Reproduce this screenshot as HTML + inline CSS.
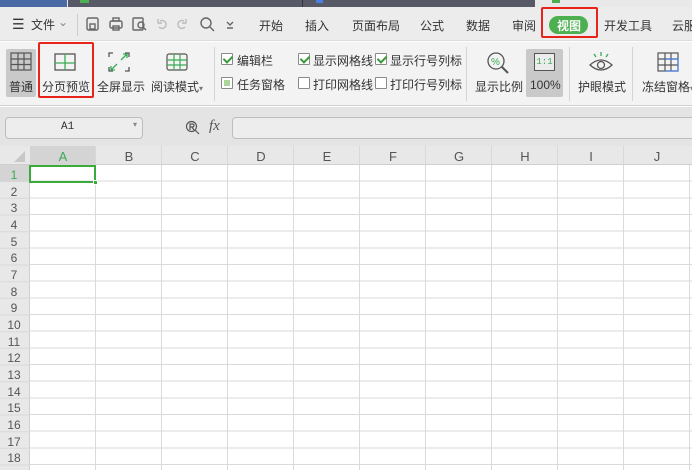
<!DOCTYPE html>
<html><head><meta charset="utf-8"><style>
*{margin:0;padding:0;box-sizing:border-box}
body{width:692px;height:470px;overflow:hidden;position:relative;background:#fff;font-family:"Liberation Sans","Noto Sans CJK SC",sans-serif;color:#333}
.a{position:absolute}
.t{position:absolute;font-size:12px;white-space:nowrap;color:#333}
.sep{position:absolute;width:1px;background:#d4d4d4}
.cb{position:absolute;width:12px;height:12px;border:1px solid #8a8a8a;background:#fff;border-radius:1px}
.cb.on::after{content:"";position:absolute;left:3px;top:0px;width:4px;height:7px;border:solid #3a9a3a;border-width:0 2px 2px 0;transform:rotate(45deg)}
</style></head><body>
<!-- top strip -->
<div class="a" style="left:0;top:0;width:692px;height:8px;background:#e9e9e9"></div>
<div class="a" style="left:0;top:0;width:67px;height:7px;background:#4a6aa5"></div>
<div class="a" style="left:68px;top:0;width:467px;height:7px;background:#575a66"></div>
<div class="a" style="left:80px;top:0;width:9px;height:3px;background:#4caf50"></div>
<div class="a" style="left:302px;top:0;width:1px;height:7px;background:#333"></div>
<div class="a" style="left:316px;top:0;width:7px;height:3px;background:#4a7ee0"></div>
<div class="a" style="left:552px;top:0;width:8px;height:3px;background:#4caf50"></div>
<!-- menu row -->
<div class="a" style="left:0;top:7px;width:692px;height:34px;background:#ececec;border-bottom:1px solid #dcdcdc"></div>
<div class="t" style="left:12px;top:16px;font-size:14px">☰</div>
<div class="t" style="left:31px;top:16px">文件</div>
<div class="t" style="left:58px;top:15px;color:#888">⌄</div>
<div class="sep" style="left:77px;top:14px;height:22px;background:#ccc"></div>
<svg class="a" style="left:86px;top:16px" width="150" height="16" fill="none" stroke="#666" stroke-width="1.4">
<rect x="1" y="2" width="11" height="12" rx="1.5"/><rect x="4" y="8" width="5" height="5"/>
<rect x="24" y="5" width="12" height="7" rx="1.5"/><rect x="27" y="2" width="6" height="3"/><rect x="27" y="10" width="6" height="4"/>
<rect x="47" y="2" width="10" height="12" rx="1"/><circle cx="55" cy="9" r="3"/><path d="M57 11l3 3"/>
<path d="M74 5a4 4 0 1 1-1 6M72 3v4h4" stroke="#bbb"/>
<path d="M98 5a4 4 0 1 0 1 6M100 3v4h-4" stroke="#bbb"/>
<circle cx="120" cy="7" r="5"/><path d="M124 11l4 4"/>
<path d="M141 6l3 3 3-3M141 12h6"/>
</svg>
<div class="t" style="left:259px;top:17px">开始</div>
<div class="t" style="left:305px;top:17px">插入</div>
<div class="t" style="left:352px;top:17px">页面布局</div>
<div class="t" style="left:420px;top:17px">公式</div>
<div class="t" style="left:466px;top:17px">数据</div>
<div class="t" style="left:512px;top:17px">审阅</div>
<div class="a" style="left:549px;top:16px;width:39px;height:18px;background:#4caf50;border-radius:9px"></div>
<div class="t" style="left:557px;top:17px;color:#fff;font-weight:bold">视图</div>
<div class="a" style="left:541px;top:7px;width:57px;height:31px;border:2px solid #e8231a;border-radius:2px"></div>
<div class="t" style="left:604px;top:17px">开发工具</div>
<div class="t" style="left:672px;top:17px">云服</div>
<!-- ribbon -->
<div class="a" style="left:0;top:42px;width:692px;height:64px;background:#f3f3f3;border-bottom:1px solid #d0d0d0"></div>
<div class="a" style="left:6px;top:49px;width:30px;height:48px;background:#c9c9c9;border-radius:2px"></div>
<svg class="a" style="left:10px;top:52px" width="22" height="20" fill="none" stroke="#555" stroke-width="1.2"><rect x="1" y="1" width="20" height="17"/><path d="M1 7h20M1 12.5h20M8 1v17M14 1v17"/></svg>
<div class="t" style="left:9px;top:78px">普通</div>
<svg class="a" style="left:54px;top:52px" width="22" height="20" fill="none" stroke-width="1.3"><rect x="1" y="2" width="20" height="16" stroke="#555"/><path d="M1 11h20M11 2v16" stroke="#3aaa55"/></svg>
<div class="t" style="left:42px;top:78px">分页预览</div>
<div class="a" style="left:38px;top:42px;width:56px;height:56px;border:2px solid #e8231a;border-radius:2px"></div>
<svg class="a" style="left:108px;top:52px" width="22" height="20" fill="none" stroke-width="1.3"><path d="M1 5V1h4M21 5V1h-4M1 15v4h4M21 15v4h-4" stroke="#555"/><path d="M13 8l6-6M3 18l6-6M15 2h4v4M3 14v4h4" stroke="#3aaa55"/></svg>
<div class="t" style="left:97px;top:78px">全屏显示</div>
<svg class="a" style="left:166px;top:52px" width="22" height="20" fill="none" stroke-width="1.2"><rect x="1" y="2" width="20" height="16" rx="2" stroke="#555"/><path d="M1 8h20M1 13h20M8 2v16M14 2v16" stroke="#3aaa55"/></svg>
<div class="t" style="left:151px;top:78px">阅读模式<span style="font-size:8px;color:#777">▾</span></div>
<div class="sep" style="left:214px;top:47px;height:54px"></div>
<div class="cb on" style="left:221px;top:53px"></div><div class="t" style="left:237px;top:52px">编辑栏</div>
<div class="cb" style="left:221px;top:77px;background:#aed49e;box-shadow:inset 0 0 0 2px #fff"></div><div class="t" style="left:237px;top:76px">任务窗格</div>
<div class="cb on" style="left:298px;top:53px"></div><div class="t" style="left:313px;top:52px">显示网格线</div>
<div class="cb" style="left:298px;top:77px"></div><div class="t" style="left:313px;top:76px">打印网格线</div>
<div class="cb on" style="left:375px;top:53px"></div><div class="t" style="left:390px;top:52px">显示行号列标</div>
<div class="cb" style="left:375px;top:77px"></div><div class="t" style="left:390px;top:76px">打印行号列标</div>
<div class="sep" style="left:466px;top:47px;height:54px"></div>
<svg class="a" style="left:486px;top:51px" width="24" height="24" fill="none" stroke="#555" stroke-width="1.3"><circle cx="10" cy="10" r="8"/><path d="M16 16l6 6" stroke-width="2"/><text x="5" y="14" font-size="10" fill="#3aaa55" stroke="none" font-family="Liberation Sans">%</text></svg>
<div class="t" style="left:475px;top:78px">显示比例</div>
<div class="a" style="left:526px;top:49px;width:37px;height:48px;background:#c9c9c9;border-radius:2px"></div>
<div class="a" style="left:534px;top:53px;width:21px;height:18px;border:1.3px solid #555;background:#ececec;font-size:9px;color:#3aaa55;text-align:center;line-height:16px;font-family:'Liberation Mono',monospace">1:1</div>
<div class="t" style="left:530px;top:78px">100%</div>
<div class="sep" style="left:569px;top:47px;height:54px"></div>
<svg class="a" style="left:588px;top:50px" width="26" height="24" fill="none" stroke="#555" stroke-width="1.3"><path d="M2 15q11-10 22 0q-11 10-22 0z"/><circle cx="13" cy="15" r="3.5"/><path d="M13 2v4M6 4l2 3M20 4l-2 3" stroke="#3aaa55"/></svg>
<div class="t" style="left:578px;top:78px">护眼模式</div>
<div class="sep" style="left:632px;top:47px;height:54px"></div>
<svg class="a" style="left:657px;top:52px" width="22" height="20" fill="none" stroke-width="1.2"><rect x="1" y="1" width="20" height="18" stroke="#555"/><path d="M1 7h20M8 1v18M14 1v18M1 13h20" stroke="#555"/><path d="M8 7h13v12H8" stroke="#4a7ee0"/></svg>
<div class="t" style="left:642px;top:78px">冻结窗格<span style="font-size:8px;color:#777">▾</span></div>
<!-- formula area -->
<div class="a" style="left:0;top:107px;width:692px;height:39px;background:#e4e4e4"></div>
<div class="a" style="left:5px;top:117px;width:138px;height:22px;background:#ededed;border:1px solid #bdbdbd;border-radius:4px"></div>
<div class="t" style="left:61px;top:121px;font-family:'Liberation Mono',monospace;font-size:11px">A1</div>
<div class="t" style="left:133px;top:120px;font-size:8px;color:#888">▾</div>
<svg class="a" style="left:185px;top:120px" width="16" height="16" fill="none" stroke="#555" stroke-width="1.2"><circle cx="6.5" cy="6.5" r="5"/><path d="M10 10l4 4"/><path d="M5 4h2.5a1.5 1.5 0 0 1 0 3H5zM5 4v6M7 7l2 3"/></svg>
<div class="t" style="left:209px;top:118px;font-family:'Liberation Serif',serif;font-style:italic;font-size:15px;color:#555">fx</div>
<div class="a" style="left:232px;top:117px;width:470px;height:22px;background:#ededed;border:1px solid #bdbdbd;border-radius:4px"></div>
<!-- grid -->
<div class="a" style="left:0;top:146px;width:692px;height:19px;background:#e8e8e8;border-bottom:1px solid #cfcfcf"></div>
<div class="a" style="left:30px;top:146px;width:66px;height:19px;background:#d4d4d4"></div>
<div class="a" style="left:0;top:165px;width:30px;height:305px;background:#e8e8e8;border-right:1px solid #cfcfcf"></div>
<div class="a" style="left:0;top:165px;width:30px;height:17px;background:#d4d4d4"></div>
<svg class="a" style="left:12px;top:151px" width="14" height="12"><path d="M13 0V11H2z" fill="#c8c8c8"/></svg>
<div class="a" style="left:30px;top:165px;width:662px;height:305px;background-image:repeating-linear-gradient(to bottom,transparent 0,transparent 15.67px,#dadada 15.67px,#dadada 16.67px),repeating-linear-gradient(to right,transparent 0,transparent 65px,#dadada 65px,#dadada 66px)"></div>
<svg class="a" style="left:0;top:146px" width="692" height="324" font-family="Liberation Sans" font-size="13" fill="#555">
<g stroke="#d8d8d8"><line x1="95.5" y1="0" x2="95.5" y2="19"/><line x1="161.5" y1="0" x2="161.5" y2="19"/><line x1="227.5" y1="0" x2="227.5" y2="19"/><line x1="293.5" y1="0" x2="293.5" y2="19"/><line x1="359.5" y1="0" x2="359.5" y2="19"/><line x1="425.5" y1="0" x2="425.5" y2="19"/><line x1="491.5" y1="0" x2="491.5" y2="19"/><line x1="557.5" y1="0" x2="557.5" y2="19"/><line x1="623.5" y1="0" x2="623.5" y2="19"/></g>
<g text-anchor="middle"><text x="63" y="15" fill="#3aaa55">A</text><text x="129" y="15">B</text><text x="195" y="15">C</text><text x="261" y="15">D</text><text x="327" y="15">E</text><text x="393" y="15">F</text><text x="459" y="15">G</text><text x="525" y="15">H</text><text x="591" y="15">I</text><text x="657" y="15">J</text></g>
<g text-anchor="middle" font-size="12">
<text x="14" y="33" fill="#3aaa55">1</text><text x="14" y="50">2</text><text x="14" y="66">3</text><text x="14" y="83">4</text><text x="14" y="100">5</text><text x="14" y="116">6</text><text x="14" y="133">7</text><text x="14" y="150">8</text><text x="14" y="166">9</text><text x="14" y="183">10</text><text x="14" y="200">11</text><text x="14" y="216">12</text><text x="14" y="233">13</text><text x="14" y="250">14</text><text x="14" y="266">15</text><text x="14" y="283">16</text><text x="14" y="300">17</text><text x="14" y="316">18</text></g>
<g stroke="#d8d8d8"><line x1="0" y1="35.67" x2="30" y2="35.67"/><line x1="0" y1="52.3" x2="30" y2="52.3"/><line x1="0" y1="69" x2="30" y2="69"/><line x1="0" y1="85.7" x2="30" y2="85.7"/><line x1="0" y1="102.3" x2="30" y2="102.3"/><line x1="0" y1="119" x2="30" y2="119"/><line x1="0" y1="135.7" x2="30" y2="135.7"/><line x1="0" y1="152.3" x2="30" y2="152.3"/><line x1="0" y1="169" x2="30" y2="169"/><line x1="0" y1="185.7" x2="30" y2="185.7"/><line x1="0" y1="202.3" x2="30" y2="202.3"/><line x1="0" y1="219" x2="30" y2="219"/><line x1="0" y1="235.7" x2="30" y2="235.7"/><line x1="0" y1="252.3" x2="30" y2="252.3"/><line x1="0" y1="269" x2="30" y2="269"/><line x1="0" y1="285.7" x2="30" y2="285.7"/><line x1="0" y1="302.3" x2="30" y2="302.3"/><line x1="0" y1="319" x2="30" y2="319"/></g>
</svg>
<div class="a" style="left:29px;top:165px;width:67px;height:18px;border:2px solid #3aaa3a"></div>
<div class="a" style="left:93px;top:180px;width:5px;height:5px;background:#3aaa3a;border:1px solid #fff"></div>
</body></html>
